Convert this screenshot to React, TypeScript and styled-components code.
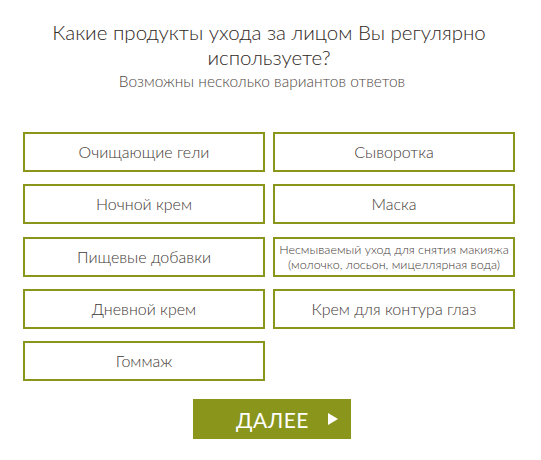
import React from "react";
import styled, { createGlobalStyle } from "styled-components";

const Global = createGlobalStyle`
  html, body { margin: 0; padding: 0; background: #ffffff; }
  body { font-family: "Lato", "Open Sans", sans-serif; }
`;

const Page = styled.div`
  width: 541px;
  height: 460px;
  box-sizing: border-box;
  padding: 20px 26px 0 23px;
  display: flex;
  flex-direction: column;
  align-items: center;
`;

const Title = styled.h1`
  margin: 0;
  width: 100%;
  text-align: center;
  font-family: "Lato", sans-serif;
  font-weight: 300;
  font-size: 20.5px;
  line-height: 25px;
  color: #2f2824;
`;

const Subtitle = styled.p`
  margin: 1px 0 0;
  padding-right: 14px;
  box-sizing: border-box;
  width: 100%;
  text-align: center;
  font-family: "Lato", sans-serif;
  font-weight: 300;
  font-size: 15.5px;
  line-height: 20px;
  color: #4f4743;
`;

const Grid = styled.div`
  margin-top: 41px;
  width: 100%;
  display: grid;
  grid-template-columns: 242px 242px;
  column-gap: 8px;
  row-gap: 12.25px;
`;

const Option = styled.button<{ $small?: boolean }>`
  height: 40px;
  box-sizing: border-box;
  border: 2px solid #8a951c;
  background: #fff;
  padding: 0 4px;
  display: flex;
  align-items: center;
  justify-content: center;
  text-align: center;
  font-family: "Lato", sans-serif;
  font-weight: 300;
  font-size: ${(p) => (p.$small ? "12.5px" : "16px")};
  line-height: ${(p) => (p.$small ? "15px" : "18px")};
  color: #3f3936;
  cursor: pointer;
`;

const NextButton = styled.button`
  margin-top: 18px;
  margin-left: 6px;
  width: 158px;
  height: 40px;
  border: none;
  background: #8a951c;
  color: #fff;
  display: flex;
  align-items: center;
  justify-content: center;
  gap: 19px;
  padding: 0 0 0 30px;
  font-family: "Lato", sans-serif;
  font-weight: 400;
  font-size: 21px;
  letter-spacing: 0.5px;
  cursor: pointer;
`;

const Arrow = styled.svg`
  width: 10px;
  height: 12px;
  flex: none;
`;

const options: { label: React.ReactNode; small?: boolean }[] = [
  { label: "Очищающие гели" },
  { label: "Сыворотка" },
  { label: "Ночной крем" },
  { label: "Маска" },
  { label: "Пищевые добавки" },
  {
    label: (
      <>
        Несмываемый уход для снятия макияжа
        <br />
        (молочко, лосьон, мицеллярная вода)
      </>
    ),
    small: true,
  },
  { label: "Дневной крем" },
  { label: "Крем для контура глаз" },
  { label: "Гоммаж" },
];

export default function App() {
  return (
    <>
      <Global />
      <Page>
        <Title>
          Какие продукты ухода за лицом Вы регулярно
          <br />
          используете?
        </Title>
        <Subtitle>Возможны несколько вариантов ответов</Subtitle>
        <Grid>
          {options.map((o, i) => (
            <Option key={i} $small={o.small}>
              <span>{o.label}</span>
            </Option>
          ))}
        </Grid>
        <NextButton>
          <span>ДАЛЕЕ</span>
          <Arrow viewBox="0 0 10 12">
            <polygon points="0,0 10,6 0,12" fill="#fff" />
          </Arrow>
        </NextButton>
      </Page>
    </>
  );
}
